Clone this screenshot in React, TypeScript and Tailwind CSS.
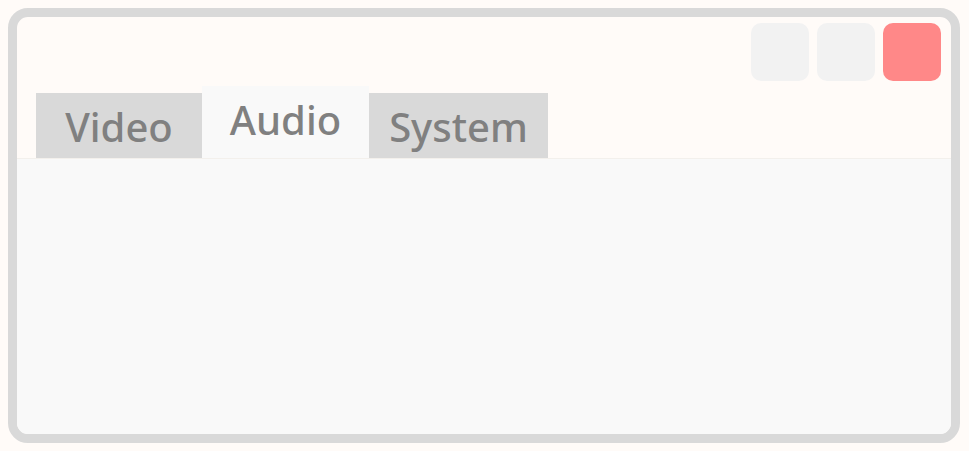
import React from 'react';

const tabs = [
  { label: 'Video', width: 'w-[166px]', active: false },
  { label: 'Audio', width: 'w-[167px]', active: true },
  { label: 'System', width: 'w-[179px]', active: false },
];

const App: React.FC = () => {
  return (
    <div className="h-screen bg-[#fffbf8] py-2 pl-2 pr-[9px] font-['Noto_Sans',sans-serif]">
      <div className="flex h-full flex-col overflow-hidden rounded-[20px] border-[9px] border-[#d9d9d9] bg-[#fffbf8]">
        {/* title bar */}
        <div className="flex justify-end gap-2 pr-[10px] pt-[6px]">
          <div className="h-[58px] w-[58px] rounded-[10px] bg-[#f2f2f2]" />
          <div className="h-[58px] w-[58px] rounded-[10px] bg-[#f2f2f2]" />
          <div className="h-[58px] w-[58px] rounded-[10px] bg-[#ff8888]" />
        </div>

        {/* tabs */}
        <div className="mt-[5px] flex items-end pl-[19px]">
          {tabs.map((tab) => (
            <div
              key={tab.label}
              className={
                tab.active
                  ? `${tab.width} h-[72px] bg-[#f9f9f9] pt-[14px] text-center text-[40px] font-medium leading-none text-[#808080]`
                  : `${tab.width} h-[65px] bg-[#d9d9d9] pt-[14px] text-center text-[40px] font-medium leading-none text-[#808080]`
              }
            >
              {tab.label}
            </div>
          ))}
        </div>

        {/* content */}
        <div className="flex-1 border-t border-[#f3f0ec] bg-[#f9f9f9]" />
      </div>
    </div>
  );
};

export default App;
